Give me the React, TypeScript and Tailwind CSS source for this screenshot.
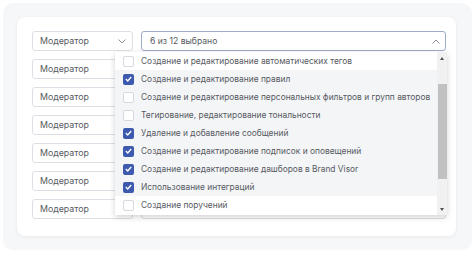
const permissions = [
  { label: "Создание и редактирование автоматических тегов", checked: false },
  { label: "Создание и редактирование правил", checked: true },
  { label: "Создание и редактирование персональных фильтров и групп авторов", checked: false },
  { label: "Тегирование, редактирование тональности", checked: false },
  { label: "Удаление и добавление сообщений", checked: true },
  { label: "Создание и редактирование подписок и оповещений", checked: true },
  { label: "Создание и редактирование дашборов в Brand Visor", checked: true },
  { label: "Использование интеграций", checked: true },
  { label: "Создание поручений", checked: false },
];

const Chevron = ({ up = false }: { up?: boolean }) => (
  <svg width="8" height="5" viewBox="0 0 8 5" fill="none" className="shrink-0">
    <path
      d={up ? "M0.5 4.5L4 1L7.5 4.5" : "M0.5 0.5L4 4L7.5 0.5"}
      stroke="#8a8f99"
      strokeWidth="1"
    />
  </svg>
);

const Checkbox = ({ checked }: { checked: boolean }) =>
  checked ? (
    <div className="w-[11px] h-[11px] rounded-[2px] bg-[#3d5aae] flex items-center justify-center shrink-0">
      <svg width="7" height="6" viewBox="0 0 7 6" fill="none">
        <path d="M0.8 3.1L2.7 4.9L6.2 1" stroke="white" strokeWidth="1.4" />
      </svg>
    </div>
  ) : (
    <div className="w-[11px] h-[11px] rounded-[2px] border border-[#d6d9df] bg-white shrink-0" />
  );

const Dropdown = () => (
  <div className="absolute left-[-27px] top-[20px] w-[332px] h-[163px] bg-white flex shadow-[0_2px_6px_rgba(0,0,0,0.18)] z-10">
    <div className="flex-1 min-w-0 overflow-hidden flex flex-col">
      {permissions.map((p, i) => (
        <div
          key={p.label}
          className={
            "h-[18px] flex items-center gap-[7px] pl-[8px] " +
            (i === 0 || i === permissions.length - 1 ? "bg-white" : "bg-[#f4f5f7]")
          }
        >
          <Checkbox checked={p.checked} />
          <span className="text-[8.4px] text-[#565a62] whitespace-nowrap">{p.label}</span>
        </div>
      ))}
    </div>
    <div className="w-[10px] shrink-0 bg-[#f1f1f1] flex flex-col items-center">
      <div className="h-[12px] flex items-center justify-center">
        <div className="w-0 h-0 border-l-[2.5px] border-r-[2.5px] border-b-[3px] border-l-transparent border-r-transparent border-b-[#505050]" />
      </div>
      <div className="mt-[20px] w-[9px] h-[95px] bg-[#c1c1c1]" />
      <div className="flex-1" />
      <div className="h-[12px] flex items-center justify-center">
        <div className="w-0 h-0 border-l-[2.5px] border-r-[2.5px] border-t-[3px] border-l-transparent border-r-transparent border-t-[#505050]" />
      </div>
    </div>
  </div>
);

export default function App() {
  const rows = Array.from({ length: 7 });
  return (
    <div
      className="w-[474px] h-[253px] bg-white p-[3px]"
      style={{ fontFamily: "Inter, 'Noto Sans', sans-serif" }}
    >
      <div className="w-[469px] h-[247px] bg-[#f6f7f9] rounded-[10px] pt-[14px] pl-[14px]">
        <div className="w-[439px] h-[219px] bg-white rounded-[8px] shadow-[0_1px_4px_rgba(0,0,0,0.06)] pt-[14px] pl-[15px] flex flex-col gap-[8px]">
          {rows.map((_, i) => (
            <div key={i} className="flex gap-[8px]">
              <div className="w-[101px] h-[20px] border border-[#dcdfe5] rounded-[3px] flex items-center justify-between pl-[7px] pr-[6px]">
                <span className="text-[8.8px] text-[#565a62]">Модератор</span>
                <Chevron />
              </div>
              <div
                className={
                  "relative w-[305px] h-[20px] rounded-[3px] flex items-center justify-between pl-[8px] pr-[5px] border " +
                  (i === 0 ? "border-[#9eabc9]" : "border-[#dcdfe5]")
                }
              >
                <span className="text-[8.6px] text-[#565a62]">6 из 12 выбрано</span>
                <Chevron up={i === 0} />
                {i === 0 && <Dropdown />}
              </div>
            </div>
          ))}
        </div>
      </div>
    </div>
  );
}
